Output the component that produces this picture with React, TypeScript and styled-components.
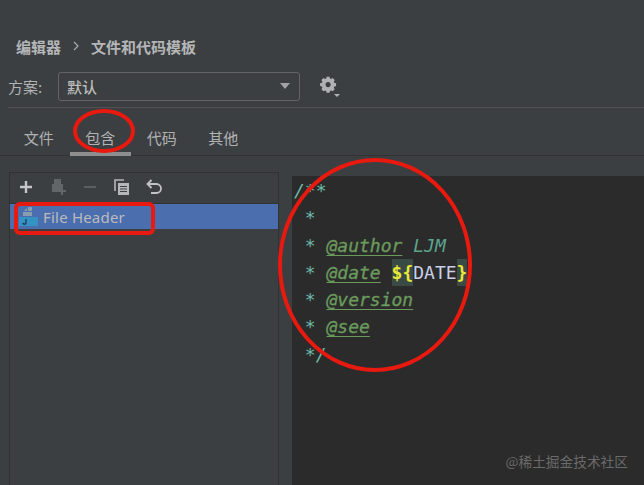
import React from "react";
import styled, { createGlobalStyle } from "styled-components";

const Global = createGlobalStyle`
  html, body { margin: 0; padding: 0; background: #3c3f41; }
  #root { width: 644px; height: 485px; overflow: hidden; }
`;
const Page = styled.div`
  position: relative; width: 644px; height: 485px; background: #3c3f41; overflow: hidden;
  display: flex; flex-direction: column;
  font-family: "Noto Sans CJK SC", "Liberation Sans", sans-serif; color: #bbbbbb;
`;
const Crumbs = styled.div`
  display: flex; align-items: center; height: 20px; margin: 36px 0 0 16px;
  font-size: 15px; font-weight: 700; color: #b4b6b8;
`;
const Chevron = styled.svg`width: 8px; height: 10px; margin: 0 11px 0 11px;`;
const SchemeRow = styled.div`
  display: flex; align-items: center; height: 29px; margin: 16px 0 0 8px; gap: 15px;
`;
const SchemeLabel = styled.span`font-size: 15px; width: 35px; color: #b0b2b4; white-space: nowrap; padding-bottom: 1px;`;
const Select = styled.div`
  width: 242px; height: 29px; box-sizing: border-box; border: 1px solid #646464; border-radius: 3px;
  background: #3c3f41; display: flex; align-items: center; justify-content: space-between;
  padding: 0 9px 1px 8px; font-size: 15px; font-weight: 500; color: #bbbbbb;
`;
const Caret = styled.div`
  width: 0; height: 0; border-left: 5.5px solid transparent; border-right: 5.5px solid transparent;
  border-top: 6px solid #a0a2a4;
`;
const GearWrap = styled.div`margin-left: 4px; width: 24px; height: 24px; margin-top: 3px;`;
const Rule = styled.div`height: 1px; background: #515151; margin: 6px 0 0 8px;`;
const Tabs = styled.div`
  display: flex; height: 48px; border-bottom: 1px solid #323232; padding-left: 8px; box-sizing: border-box;
`;
const Tab = styled.div<{ $active?: boolean }>`
  width: 61.5px; flex: none; box-sizing: border-box; padding-top: 20px; text-align: center; font-size: 15px; line-height: 20px;
  color: #b0b2b4; border-bottom: 4px solid ${(p) => (p.$active ? "#8c8e90" : "transparent")};
  height: 48px;
`;
const Body = styled.div`display: flex; flex: 1; min-height: 0; padding: 16px 0 0 9px;`;
const ListPanel = styled.div`
  width: 270px; box-sizing: border-box; border: 1px solid #323232; border-bottom: 0;
  background: #3c3f41;
`;
const Toolbar = styled.div`
  height: 31px; display: flex; align-items: center; padding: 0 0 2px 7px; box-sizing: border-box; border-bottom: 1px solid #323232;
`;
const ToolIcon = styled.svg`width: 18px; height: 18px; margin-right: 14px; flex: none;`;
const ListRow = styled.div`
  height: 25px; background: #4b6eaf; display: flex; align-items: center; padding-left: 9px; gap: 5px;
  font-size: 15px; letter-spacing: 0.2px; color: #bbbbbb; font-family: "Noto Sans", "Liberation Sans", sans-serif;
`;
const FileIcon = styled.svg`width: 19px; height: 21px; flex: none;`;
const Editor = styled.div`
  width: 352px; margin: 4px 0 0 13px; background: #2b2b2b; position: relative;
  padding: 1px 0 0 2px; box-sizing: border-box;
  font-family: "DejaVu Sans Mono", monospace; font-size: 18px; line-height: 27.3px;
`;
const Line = styled.div`white-space: pre; height: 27.3px; font-style: italic; color: #629755;`;
const Star = styled.span`color: #6fb9a8;`;
const DocTag = styled.span`color: #6a9a5c; -webkit-text-stroke: 0.35px #6a9a5c; text-decoration: underline; text-underline-offset: 3px; text-decoration-thickness: 1px;`;
const Value = styled.span`color: #5ba58f;`;
const Mark = styled.span`display: inline-block; height: 27px; color: #e8e83a; background: #3a4a44; font-style: normal; font-weight: 700; vertical-align: top;`;
const Plain = styled.span`color: #c9cfe8; font-style: normal;`;
const Watermark = styled.div`
  position: absolute; right: 16px; bottom: 15px; font-size: 13.7px; line-height: 18px; color: #6a6a6a;
  font-family: "Noto Sans CJK SC", sans-serif;
`;
const Annotations = styled.svg`position: absolute; left: 0; top: 0; pointer-events: none;`;

export default function App() {
  return (
    <Page>
      <Global />
      <Crumbs>
        编辑器
        <Chevron viewBox="0 0 8 10"><path d="M2 1l4 4-4 4" fill="none" stroke="#a8aaac" strokeWidth="1.2" /></Chevron>
        文件和代码模板
      </Crumbs>
      <SchemeRow>
        <SchemeLabel>方案:</SchemeLabel>
        <Select>默认<Caret /></Select>
        <GearWrap>
          <svg width="24" height="24" viewBox="0 0 24 24">
            <path fill="#afb1b3" fillRule="evenodd" d="M7.8 2h3.4l.5 2.1 1.3.6 1.9-1.1 2.4 2.4-1.1 1.9.6 1.3 2.1.5v3.4l-2.1.5-.6 1.3 1.1 1.9-2.4 2.4-1.9-1.1-1.3.6-.5 2.1H7.8l-.5-2.1-1.3-.6-1.9 1.1-2.4-2.4 1.1-1.9-.6-1.3L.1 13V9.6l2.1-.5.6-1.3-1.1-1.9 2.4-2.4 1.9 1.1 1.3-.6zM9.5 8.3a3 3 0 100 6 3 3 0 000-6z" transform="translate(1 -1) scale(.85)" />
            <path fill="#afb1b3" d="M15 18h6l-3 3z" />
          </svg>
        </GearWrap>
      </SchemeRow>
      <Rule />
      <Tabs>
        <Tab>文件</Tab>
        <Tab $active>包含</Tab>
        <Tab>代码</Tab>
        <Tab>其他</Tab>
      </Tabs>
      <Body>
        <ListPanel>
          <Toolbar>
            <ToolIcon viewBox="0 0 18 18"><path d="M9 3v12M3 9h12" stroke="#c4c6c8" strokeWidth="2.4" /></ToolIcon>
            <ToolIcon viewBox="0 0 18 18"><path fill="#636668" d="M5 1h7v5h2v6h3v2h-3v3h-2v-3H3V6h2z" /></ToolIcon>
            <ToolIcon viewBox="0 0 18 18"><path d="M3 9h12" stroke="#5c5f61" strokeWidth="2" /></ToolIcon>
            <ToolIcon viewBox="0 0 18 18"><path fill="none" stroke="#b4b6b8" strokeWidth="1.6" d="M2 13V2h9" /><path fill="#b4b6b8" d="M5 5h11v12H5z" /><path stroke="#3c3f41" strokeWidth="1.2" d="M7 8.5h7M7 11h7M7 13.5h7" /></ToolIcon>
            <ToolIcon viewBox="0 0 18 18"><path fill="none" stroke="#c0c2c4" strokeWidth="1.8" d="M3 6h8.5a4.5 4.5 0 010 9H6" /><path fill="none" stroke="#c0c2c4" strokeWidth="1.8" d="M6.5 2L2.5 6l4 4" /></ToolIcon>
          </Toolbar>
          <ListRow>
            <FileIcon viewBox="0 0 19 21">
              <path fill="#9aa7b0" d="M9 1h4v4H9zM5 5l3-3v3zM4 6h9v4H4z" opacity=".8" />
              <path fill="#3592c4" d="M0 11h19v9H0z" />
              <path d="M7 13v3.5a1.3 1.3 0 01-3 .4" fill="none" stroke="#1d2f50" strokeWidth="1.2" />
            </FileIcon>
            File Header
          </ListRow>
        </ListPanel>
        <Editor>
          <Line><Star>/**</Star></Line>
          <Line><Star> *</Star></Line>
          <Line><Star> * </Star><DocTag>@author</DocTag><Value> LJM</Value></Line>
          <Line><Star> * </Star><DocTag>@date</DocTag> <Mark>{"${"}</Mark><Plain>DATE</Plain><Mark>{"}"}</Mark></Line>
          <Line><Star> * </Star><DocTag>@version</DocTag></Line>
          <Line><Star> * </Star><DocTag>@see</DocTag></Line>
          <Line><Star> */</Star></Line>
          <Watermark>@稀土掘金技术社区</Watermark>
        </Editor>
      </Body>
      <Annotations width="644" height="485" viewBox="0 0 644 485" fill="none" stroke="#e8190f" strokeWidth="4">
        <ellipse cx="104" cy="131" rx="29" ry="20" />
        <rect x="16" y="204" width="137" height="29" rx="4" />
        <ellipse cx="375" cy="265" rx="95" ry="105" />
      </Annotations>
    </Page>
  );
}
